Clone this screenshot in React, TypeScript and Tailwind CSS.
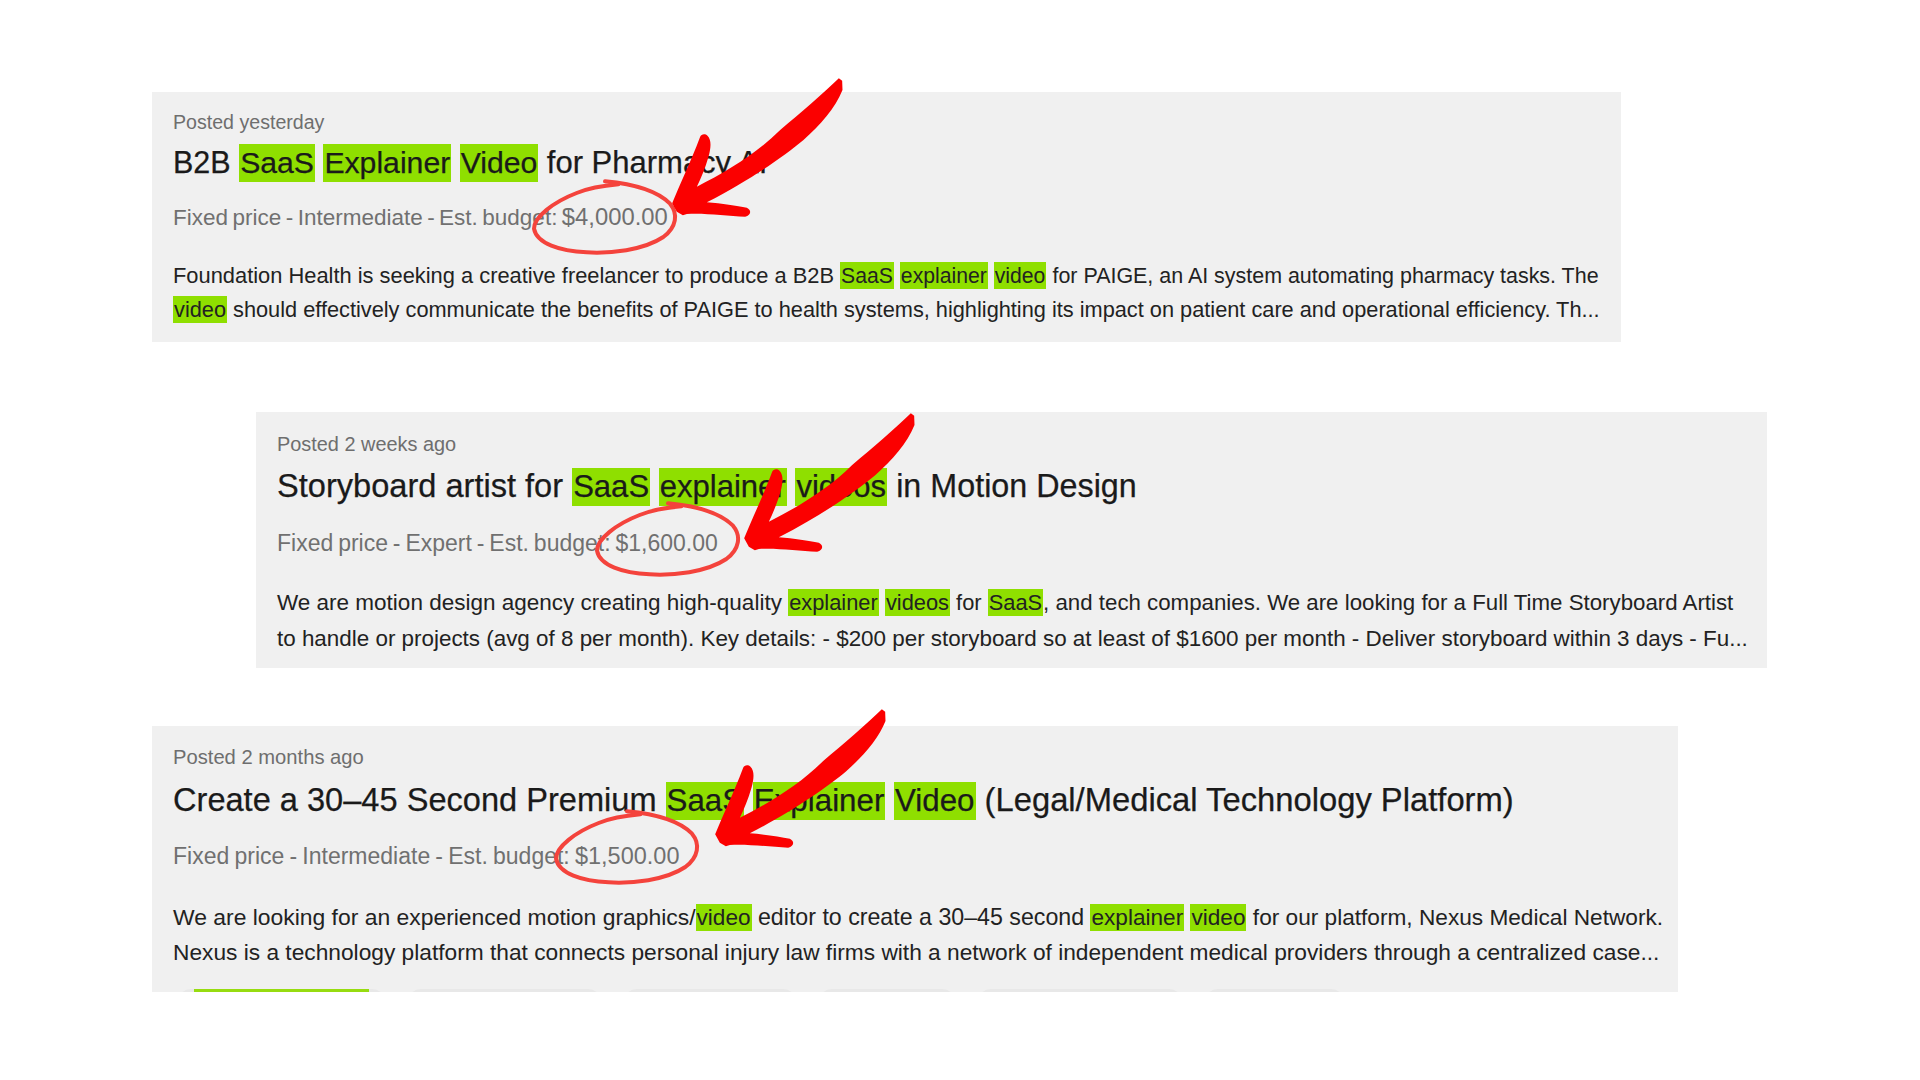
import React from "react";

const Arrow = ({ className }: { className: string }) => (
  <svg className={`absolute pointer-events-none ${className}`} width="177" height="145" viewBox="420 15 530 435">
    <path
      fill="#fb0000"
      d="M926 25 L936 32 L937 60 C915 115 870 165 820 210 C760 260 660 330 530 397 C575 400 620 408 650 413 C665 420 663 436 645 440 C590 438 520 428 470 432 L458 436 L440 425 L426 400 C450 340 480 280 510 200 C513 192 525 190 532 197 C545 210 542 235 535 260 C525 295 512 325 500 350 C590 305 680 250 750 180 C810 130 880 70 926 25 Z"
    />
  </svg>
);

const Loop = ({ className }: { className: string }) => (
  <svg className={`absolute pointer-events-none ${className}`} width="150" height="80" viewBox="0 320 450 240">
    <path
      fill="none"
      stroke="#f4433c"
      strokeWidth="12"
      strokeLinecap="round"
      d="M225 333 C300 340 380 360 420 400 C445 430 440 470 400 500 C340 540 240 550 170 546 C90 542 20 520 12 475 C12 440 70 395 140 368 C180 352 220 346 265 342"
    />
  </svg>
);

const T = ({ children }: { children: React.ReactNode }) => (
  <span className="inline-block h-[38px] leading-[38px] bg-[#8fdf00] px-[1px]">{children}</span>
);
const D = ({ children }: { children: React.ReactNode }) => (
  <span className="inline-block h-[27px] leading-[27px] bg-[#8fdf00] px-[1px]">{children}</span>
);

const font = "font-['Liberation_Sans',Arial,sans-serif]";

export default function App() {
  return (
    <div className={`w-[1920px] h-[1080px] bg-white overflow-hidden pt-[92px] ${font}`}>
      {/* card 1 */}
      <div className="relative ml-[152px] w-[1469px] h-[250px] bg-[#f0f0f0]">
        <div className="pl-[21px] pt-[18px] whitespace-nowrap">
          <div className="h-[24px] leading-[24px] text-[19.6px] text-[#6e6e6e]">Posted yesterday</div>
          <div className="mt-[9px] h-[38px] leading-[38px] text-[30.5px] text-[#1a1a1a] [-webkit-text-stroke:0.25px]">
            B2B <span className="text-[30.2px]"><T>SaaS</T> <T>Explainer</T> <T>Video</T></span> <span className="text-[31px]">for Pharmacy AI</span>
          </div>
          <div className="mt-[21px] h-[30px] leading-[30px] text-[22.5px] text-[#707070] [word-spacing:-1.8px]">
            Fixed price - Intermediate - Est. budget: <span className="text-[23.8px]">$4,000.00</span>
          </div>
          <div className="mt-[26px] h-[34px] leading-[35px] text-[21.87px] text-[#222222]">
            Foundation Health is seeking a creative freelancer to produce a B2B <span className="text-[21.2px]"><D>SaaS</D> <D>explainer</D> <D>video</D></span> <span className="text-[21.45px]">for PAIGE, an AI system automating pharmacy tasks. The</span>
          </div>
          <div className="h-[35px] leading-[35px] text-[21.75px] text-[#222222]">
            <D>video</D> should effectively communicate the benefits of PAIGE to health systems, highlighting its impact on patient care and operational efficiency. Th...
          </div>
        </div>
        <Loop className="left-[378px] top-[85px]" />
        <Arrow className="left-[518px] top-[-17px]" />
      </div>

      {/* card 2 */}
      <div className="relative mt-[70px] ml-[256px] w-[1511px] h-[256px] bg-[#f0f0f0]">
        <div className="pl-[21px] pt-[20px] whitespace-nowrap">
          <div className="h-[24px] leading-[24px] text-[19.9px] text-[#6e6e6e]">Posted 2 weeks ago</div>
          <div className="mt-[11px] h-[38px] leading-[38px] text-[32.6px] text-[#1a1a1a] [-webkit-text-stroke:0.25px]">
            Storyboard artist for <span className="text-[31.05px]"><T>SaaS</T> <T>explainer</T> <T>videos</T></span> <span className="text-[32.3px]">in Motion Design</span>
          </div>
          <div className="mt-[23px] h-[30px] leading-[30px] text-[23px] text-[#707070] [word-spacing:-1.5px]">
            Fixed price - Expert - Est. budget: $1,600.00
          </div>
          <div className="mt-[27px] h-[36px] leading-[36px] text-[22.5px] text-[#222222]">
            We are motion design agency creating high-quality <span className="text-[21.85px]"><D>explainer</D> <D>videos</D> for <D>SaaS</D></span><span className="text-[22.28px]">, and tech companies. We are looking for a Full Time Storyboard Artist</span>
          </div>
          <div className="h-[36px] leading-[36px] text-[22.41px] text-[#222222]">
            to handle or projects (avg of 8 per month). Key details: - $200 per storyboard so at least of $1600 per month - Deliver storyboard within 3 days - Fu...
          </div>
        </div>
        <Loop className="left-[337px] top-[87px]" />
        <Arrow className="left-[486px] top-[-2px]" />
      </div>

      {/* card 3 */}
      <div className="relative mt-[58px] ml-[152px] w-[1526px] h-[266px] bg-[#f0f0f0]">
        <div className="h-full overflow-hidden pl-[21px] pt-[19px] whitespace-nowrap">
          <div className="h-[24px] leading-[24px] text-[20.2px] text-[#6e6e6e]">Posted 2 months ago</div>
          <div className="mt-[12px] h-[38px] leading-[38px] text-[32.6px] text-[#1a1a1a] [-webkit-text-stroke:0.25px]">
            Create a 30–45 Second Premium <span className="text-[31.3px]"><T>SaaS</T> <T>Explainer</T> <T>Video</T></span> <span className="text-[32.75px]">(Legal/Medical Technology Platform)</span>
          </div>
          <div className="mt-[22px] h-[30px] leading-[30px] text-[23px] text-[#707070] [word-spacing:-1.2px]">
            Fixed price - Intermediate - Est. budget: <span className="text-[23.5px]">$1,500.00</span>
          </div>
          <div className="mt-[28px] h-[35px] leading-[36px] text-[22.9px] text-[#222222]">
            We are looking for an experienced motion graphics/<span className="text-[22.6px]"><D>video</D></span> <span className="text-[23.2px]">editor to create a 30–45 second</span> <span className="text-[22.6px]"><D>explainer</D> <D>video</D></span> <span className="text-[22.65px]">for our platform, Nexus Medical Network.</span>
          </div>
          <div className="h-[36px] leading-[36px] text-[22.73px] text-[#222222]">
            Nexus is a technology platform that connects personal injury law firms with a network of independent medical providers through a centralized case...
          </div>
          <div className="mt-[19px] ml-[4px] flex gap-[21px]">
            <div className="w-[209px] h-[30px] rounded-[14px] bg-[#e8e8e8] px-[17px]">
              <div className="h-full bg-[#97dc10]" />
            </div>
            <div className="w-[195px] h-[30px] rounded-[14px] bg-[#e8e8e8]" />
            <div className="w-[174px] h-[30px] rounded-[14px] bg-[#e8e8e8]" />
            <div className="w-[138px] h-[30px] rounded-[14px] bg-[#e8e8e8]" />
            <div className="w-[206px] h-[30px] rounded-[14px] bg-[#e8e8e8]" />
            <div className="w-[141px] h-[30px] rounded-[14px] bg-[#e8e8e8]" />
          </div>
        </div>
        <Loop className="left-[400px] top-[81px]" />
        <Arrow className="left-[561px] top-[-20px]" />
      </div>
    </div>
  );
}
